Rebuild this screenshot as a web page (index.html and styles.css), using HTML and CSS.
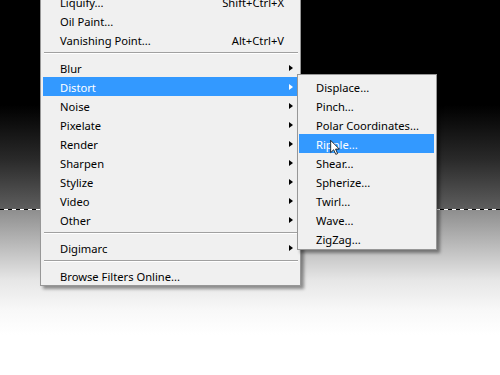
FILE: index.html
```html
<!DOCTYPE html>
<html>
<head>
<meta charset="utf-8">
<link rel="stylesheet" href="styles.css">
</head>
<body>
<div class="canvas">
  <div class="dark"></div>
  <div class="ants"></div>
  <div class="light"></div>
</div>

<div class="menu main">
  <div class="item"><span class="label">Liquify...</span><span class="key">Shift+Ctrl+X</span></div>
  <div class="item"><span class="label">Oil Paint...</span></div>
  <div class="item"><span class="label">Vanishing Point...</span><span class="key">Alt+Ctrl+V</span></div>
  <div class="sep"></div>
  <div class="item"><span class="label">Blur</span><span class="arrow"></span></div>
  <div class="item active"><span class="label">Distort</span><span class="arrow"></span></div>
  <div class="item"><span class="label">Noise</span><span class="arrow"></span></div>
  <div class="item"><span class="label">Pixelate</span><span class="arrow"></span></div>
  <div class="item"><span class="label">Render</span><span class="arrow"></span></div>
  <div class="item"><span class="label">Sharpen</span><span class="arrow"></span></div>
  <div class="item"><span class="label">Stylize</span><span class="arrow"></span></div>
  <div class="item"><span class="label">Video</span><span class="arrow"></span></div>
  <div class="item"><span class="label">Other</span><span class="arrow"></span></div>
  <div class="sep"></div>
  <div class="item"><span class="label">Digimarc</span><span class="arrow"></span></div>
  <div class="sep"></div>
  <div class="item"><span class="label">Browse Filters Online...</span></div>
</div>

<div class="menu submenu">
  <div class="item"><span class="label">Displace...</span></div>
  <div class="item"><span class="label">Pinch...</span></div>
  <div class="item"><span class="label">Polar Coordinates...</span></div>
  <div class="item active"><span class="label">Ripple...</span></div>
  <div class="item"><span class="label">Shear...</span></div>
  <div class="item"><span class="label">Spherize...</span></div>
  <div class="item"><span class="label">Twirl...</span></div>
  <div class="item"><span class="label">Wave...</span></div>
  <div class="item"><span class="label">ZigZag...</span></div>
</div>

<svg class="cursor" width="10" height="15" viewBox="0 0 12 19">
  <path d="M0.5 0.5 L0.5 16 L4.3 12.3 L7 18.2 L9.3 17.2 L6.7 11.5 L11.5 11.5 Z" fill="#fff" stroke="#000" stroke-width="1" stroke-linejoin="miter"/>
</svg>
</body>
</html>
```

FILE: styles.css
```css
html, body {
  margin: 0;
  padding: 0;
}
body {
  width: 500px;
  height: 375px;
  overflow: hidden;
  position: relative;
  font-family: "Noto Sans", "Open Sans", sans-serif;
  font-size: 11.2px;
  color: #000;
}
.canvas {
  display: flex;
  flex-direction: column;
  height: 375px;
}
.dark {
  height: 209px;
  background: linear-gradient(#000 0, #000 105px, #2a2a2a 160px, #5e5e5e 209px);
}
.ants {
  height: 1px;
  background: repeating-linear-gradient(90deg, #000 0 4px, #fff 4px 8px);
}
.light {
  flex: 1;
  background: linear-gradient(#8e8e8e 0, #e6e6e6 70px, #f8f8f8 100px, #fff 125px);
}
.menu {
  position: absolute;
  background: #f0f0f0;
  border: 1px solid #979797;
  box-shadow: 3px 3px 3px rgba(0, 0, 0, 0.4);
}
.main {
  left: 40px;
  top: -11px;
  width: 261px;
  box-sizing: border-box;
  padding: 2px 3px 0 2px;
}
.submenu {
  left: 297px;
  top: 74px;
  width: 140px;
  box-sizing: border-box;
  padding: 2px 2px 1px 1px;
}
.item {
  display: flex;
  align-items: center;
  height: 19px;
  padding: 0 4px 0 17px;
  white-space: nowrap;
}
.label {
  flex: 1;
  position: relative;
  top: 1px;
}
.key {
  margin-right: 9px;
  position: relative;
  top: 1px;
}
.arrow {
  width: 0;
  height: 0;
  border-top: 3.5px solid transparent;
  border-bottom: 3.5px solid transparent;
  border-left: 4px solid #000;
}
.active {
  background: #3399ff;
  color: #fff;
}
.active .arrow {
  border-left-color: #fff;
}
.sep {
  height: 9px;
  display: flex;
  flex-direction: column;
  padding-top: 3px;
  box-sizing: border-box;
  margin: 0 -1px 0 1px;
}
.sep::before {
  content: "";
  height: 1px;
  background: #a0a0a0;
}
.sep::after {
  content: "";
  height: 1px;
  background: #fff;
}
.cursor {
  position: absolute;
  left: 330px;
  top: 140px;
}
```
